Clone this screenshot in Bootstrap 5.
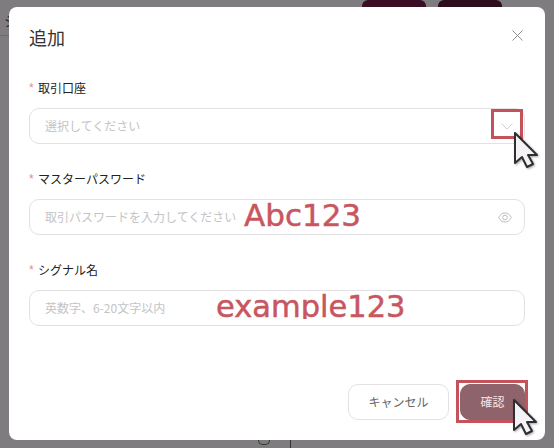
<!DOCTYPE html>
<html lang="ja">
<head>
<meta charset="utf-8">
<title>追加</title>
<link href="https://cdn.jsdelivr.net/npm/bootstrap@5.3.0/dist/css/bootstrap.min.css" rel="stylesheet">
<style>
html,body{height:448px;overflow:hidden}
body{background:#7f7c7f;font-family:"Noto Sans CJK JP","Noto Sans",sans-serif;position:relative;color:#222}
.bg-strip{height:7px;padding-left:362px;gap:12px}
.bg-pill{width:64px;height:7px;background:#3a0d24;border-radius:6px 6px 0 0}
.bg-pill.two{background:#2d0c1e}
.bg-rule{position:absolute;left:0;top:35px;width:9px;height:1px;background:#6d6a6d}
.bg-char{position:absolute;left:4px;top:10px;font-size:14px;color:#222;line-height:20px}
.bg-arc{position:absolute;left:258px;top:440px;width:12px;height:5px;border:1px solid #333;border-top:0;border-radius:0 0 8px 8px}
.bg-vline{position:absolute;left:290px;top:440px;width:1px;height:8px;background:#333}
.dialog{position:absolute;left:9px;top:7px;width:536px;height:433px;background:#fff;border-radius:8px;padding:18px 20px 20px 20px}
.dlg-title{font-size:18px;line-height:24px;margin:0 0 29px 0;font-weight:400;color:#333}
.x-btn{position:absolute;right:22px;top:23px;width:11px;height:11px;line-height:0}
.fld{margin-bottom:25px}
.fld-label{font-size:12px;line-height:20px;margin-bottom:10px;color:#222;padding-left:9px;position:relative}
.fld-label::before{content:"*";position:absolute;left:0;top:0;color:#e58a8a;font-family:"Liberation Sans",sans-serif}
.fld-box{height:36px;border:1px solid #e3e1e4;border-radius:10px;padding:0 15px;font-size:12px;color:#c4c4c6}
.fld-box.sel{padding-right:11px}
.fld-box.pwd{padding-right:12px}
.foot{position:absolute;right:20px;bottom:20px;gap:11px}
.btn-cancel,.btn-ok{height:36px;border-radius:10px;font-size:12px;padding:0;line-height:34px}
.btn-cancel{width:101px;background:#fff;border:1px solid #e3e1e4;color:#666}
.btn-ok{width:65px;background:#8f636c;border:1px solid #8f636c;color:#f3e6e8}
.mark-box{position:absolute;border:3px solid #c3525b}
.mark-sel{left:491px;top:109px;width:32px;height:30px}
.mark-ok{left:456px;top:380px;width:72px;height:43px}
.note{position:absolute;color:#c8565f;font-family:"DejaVu Sans",sans-serif;line-height:1;white-space:nowrap;-webkit-text-stroke:.5px #c8565f}
.note-a{left:244px;top:200px;font-size:31px}
.note-b{left:216px;top:292px;font-size:30.500px}
.note-cover{position:absolute;left:280px;top:319px;width:30px;height:6px;background:#fff}
.cursor{position:absolute;width:28px;height:40px;filter:drop-shadow(1px 1px 1px rgba(0,0,0,.35))}
.cur-a{left:512px;top:131px}
.cur-b{left:511px;top:398px}
</style>
</head>
<body>
<div class="d-flex bg-strip"><div class="bg-pill"></div><div class="bg-pill two"></div></div>
<div class="bg-char">シ</div>
<div class="bg-rule"></div>
<div class="bg-arc"></div>
<div class="bg-vline"></div>

<div class="dialog">
  <h5 class="dlg-title">追加</h5>
  <div class="x-btn"><svg width="11" height="11" viewBox="0 0 11 11"><path d="M.5.5l10 10M10.500.5l-10 10" stroke="#8e8e90" stroke-width="1" fill="none"/></svg></div>
  <div class="fld">
    <div class="fld-label">取引口座</div>
    <div class="fld-box sel d-flex align-items-center justify-content-between">
      <span>選択してください</span>
      <svg width="12" height="7" viewBox="0 0 12 7"><path d="M.5.5L6 6l5.500-5.500" stroke="#cfcfd2" stroke-width="1" fill="none"/></svg>
    </div>
  </div>
  <div class="fld">
    <div class="fld-label">マスターパスワード</div>
    <div class="fld-box pwd d-flex align-items-center justify-content-between">
      <span>取引パスワードを入力してください</span>
      <svg width="14" height="11" viewBox="0 0 14 11"><path d="M.7 5.500C2.300 2.400 4.500 1 7 1s4.700 1.400 6.300 4.500C11.700 8.600 9.500 10 7 10S2.300 8.600.7 5.500z" stroke="#bdbdc0" stroke-width="1" fill="none"/><circle cx="7" cy="5.500" r="2.300" stroke="#bdbdc0" stroke-width="1" fill="none"/></svg>
    </div>
  </div>
  <div class="fld">
    <div class="fld-label">シグナル名</div>
    <div class="fld-box d-flex align-items-center"><span>英数字、6-20文字以内</span></div>
  </div>
  <div class="foot d-flex">
    <button type="button" class="btn btn-cancel">キャンセル</button>
    <button type="button" class="btn btn-ok">確認</button>
  </div>
</div>

<div class="mark-box mark-sel"></div>
<div class="mark-box mark-ok"></div>
<div class="note note-a">Abc123</div>
<div class="note note-b">example123</div>
<div class="note-cover"></div>

<svg class="cursor cur-a" viewBox="0 0 28 40"><path d="M3 2v30l7-6 5 10 6-3-5-9h9z" fill="#f4f2f5" stroke="#2e2e33" stroke-width="2" stroke-linejoin="round"/></svg>
<svg class="cursor cur-b" viewBox="0 0 28 40"><path d="M3 2v30l7-6 5 10 6-3-5-9h9z" fill="#f4f2f5" stroke="#2e2e33" stroke-width="2" stroke-linejoin="round"/></svg>
<script src="https://cdn.jsdelivr.net/npm/bootstrap@5.3.0/dist/js/bootstrap.bundle.min.js"></script>
</body>
</html>
